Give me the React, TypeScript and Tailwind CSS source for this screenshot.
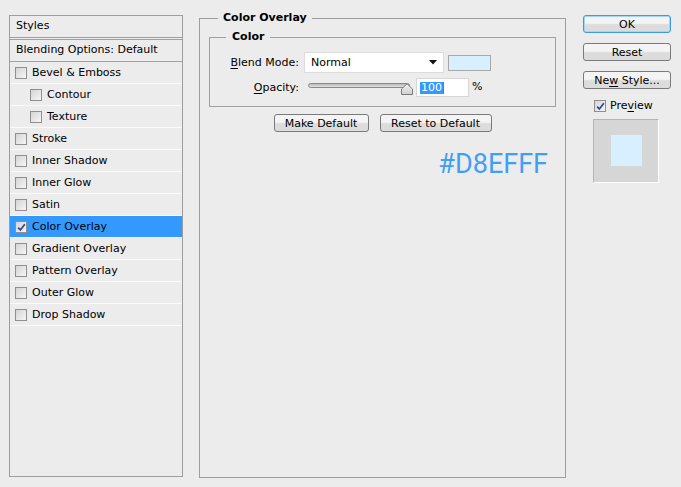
import React from 'react';

const font = { fontFamily: '"DejaVu Sans", Tahoma, Verdana, sans-serif' };

const styleRows: { label: string; indent?: boolean; checked?: boolean }[] = [
  { label: 'Bevel & Emboss' },
  { label: 'Contour', indent: true },
  { label: 'Texture', indent: true },
  { label: 'Stroke' },
  { label: 'Inner Shadow' },
  { label: 'Inner Glow' },
  { label: 'Satin' },
  { label: 'Color Overlay', checked: true },
  { label: 'Gradient Overlay' },
  { label: 'Pattern Overlay' },
  { label: 'Outer Glow' },
  { label: 'Drop Shadow' },
];

function CheckBox({ checked }: { checked?: boolean }) {
  return (
    <div className="relative w-[12px] h-[12px] shrink-0 border border-[#8f8f8f] bg-linear-to-br from-[#d4d4d4] to-[#f6f6f6]">
      {checked && (
        <svg className="absolute left-[1px] top-[1px]" width="9" height="9" viewBox="0 0 9 9">
          <path d="M1.2 4.6 L3.4 7 L7.8 1.2" fill="none" stroke="#2b4590" strokeWidth="1.7" />
        </svg>
      )}
    </div>
  );
}

function Button({ children, focused }: { children: React.ReactNode; focused?: boolean }) {
  return (
    <div
      className={`flex items-center justify-center h-[18px] rounded-[3px] border bg-linear-to-b from-[#f4f4f4] from-45% to-[#dcdcdc] to-55% text-[11px] leading-none text-black ${
        focused ? 'border-[#3c9ae0] shadow-[inset_0_0_0_1px_#a6d4f6]' : 'border-[#7a7a7a]'
      }`}
    >
      {children}
    </div>
  );
}

export default function App() {
  return (
    <div className="w-[681px] h-[487px] bg-[#ececec] flex items-start text-black" style={font}>
      {/* Styles list */}
      <div className="ml-[9px] mt-[15px] w-[174px] h-[462px] border border-[#9d9d9d] flex flex-col text-[11px]">
        <div className="h-[22px] border-b border-[#a0a0a0] flex items-center pl-[6px] pb-[1px]">Styles</div>
        <div className="mt-[1px] h-[23px] border-y border-[#a0a0a0] flex items-center pl-[6px]">
          Blending Options: Default
        </div>
        {styleRows.map((r) => (
          <div
            key={r.label}
            className={`h-[22px] border-b border-[#fafafa] flex items-center gap-[5px] ${
              r.indent ? 'pl-[20px]' : 'pl-[5px]'
            } ${r.checked ? 'bg-[#3399ff]' : ''}`}
          >
            <CheckBox checked={r.checked} />
            <span className="mt-[2px]">{r.label}</span>
          </div>
        ))}
      </div>

      {/* Color Overlay panel */}
      <fieldset className="ml-[16px] mt-[10px] w-[367px] h-[468px] border border-[#9d9d9d] px-[9px]">
        <legend className="ml-[9px] px-[5px] text-[11px] font-bold leading-[16px]">Color Overlay</legend>
        <fieldset className="mt-[3px] border border-[#a0a0a0] pb-[9px] text-[11px]">
          <legend className="ml-[16px] px-[6px] font-bold leading-[16px]">Color</legend>
          <div className="mt-[7px] flex items-center">
            <div className="w-[89px] text-right mt-[2px]">
              <span className="underline underline-offset-2">B</span>lend Mode:
            </div>
            <div className="ml-[5px] w-[140px] h-[21px] bg-white border border-[#dcdcdc] flex items-center justify-between pl-[6px] pr-[6px]">
              <span className="mt-[2px]">Normal</span>
              <svg width="8" height="5" viewBox="0 0 8 5">
                <path d="M0 0 H8 L4 4.5 Z" fill="#111" />
              </svg>
            </div>
            <div className="ml-[4px] w-[43px] h-[16px] bg-[#D8EFFF] border border-[#a8a8a8]" />
          </div>
          <div className="mt-[5px] flex items-center">
            <div className="w-[89px] text-right mt-[1px]">
              <span className="underline underline-offset-2">O</span>pacity:
            </div>
            <div className="relative ml-[9px] w-[104px] h-[19px]">
              <div className="absolute left-0 top-[5px] w-[102px] h-[5px] rounded-full border border-[#8a8a8a] bg-linear-to-b from-[#b8b8b8] to-[#e2e2e2]" />
              <svg className="absolute left-[93px] top-[5px]" width="12" height="12" viewBox="0 0 12 12">
                <defs>
                  <linearGradient id="th" x1="0" y1="0" x2="0" y2="1">
                    <stop offset="0" stopColor="#f4f4f4" />
                    <stop offset="1" stopColor="#cfcfcf" />
                  </linearGradient>
                </defs>
                <path d="M0.5 11.5 V6 L6 0.8 L11.5 6 V11.5 Z" fill="url(#th)" stroke="#7a7a7a" />
              </svg>
            </div>
            <div className="ml-[4px] w-[53px] h-[19px] bg-white border border-[#d6d6d6] flex items-center pl-[3px]">
              <span className="bg-[#3399ff] text-white leading-[12px] px-[1px]">100</span>
              <span className="w-[1px] h-[12px] bg-[#c8640a]" />
            </div>
            <span className="ml-[3px]">%</span>
          </div>
        </fieldset>
        <div className="mt-[7px] flex justify-center gap-[11px]">
          <div className="w-[95px]">
            <Button>Make Default</Button>
          </div>
          <div className="w-[112px]">
            <Button>Reset to Default</Button>
          </div>
        </div>
        <div className="mt-[18px] flex justify-end pr-[8px]">
          <span
            className="text-[27px] leading-[28px] text-[#3f9ff5]"
            style={{ fontFamily: 'Roboto, "Liberation Sans", sans-serif' }}
          >
            #D8EFFF
          </span>
        </div>
      </fieldset>

      {/* Right column */}
      <div className="ml-[17px] mt-[15px] w-[88px] flex flex-col text-[11px]">
        <Button focused>OK</Button>
        <div className="mt-[10px]">
          <Button>Reset</Button>
        </div>
        <div className="mt-[10px]">
          <Button>
            Ne<span className="underline underline-offset-2">w</span>&nbsp;Style...
          </Button>
        </div>
        <div className="mt-[8px] ml-[11px] flex items-center gap-[4px]">
          <CheckBox checked />
          <span className="mt-[1px]">
            Pre<span className="underline underline-offset-2">v</span>iew
          </span>
        </div>
        <div className="mt-[4px] ml-[10px] w-[66px] h-[64px] bg-[#d6d6d6] border border-[#b4b4b4] border-r-white border-b-white flex items-center justify-center">
          <div className="w-[31px] h-[31px] bg-[#D8EFFF]" />
        </div>
      </div>
    </div>
  );
}
